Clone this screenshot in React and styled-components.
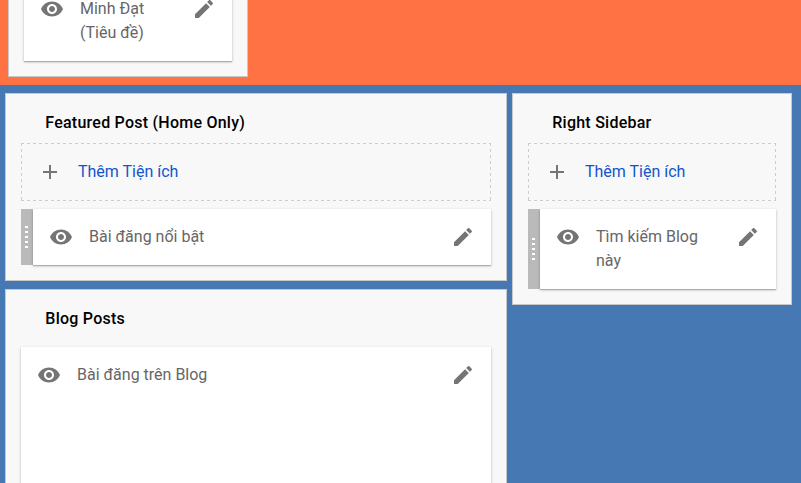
import React from "react";
import styled, { createGlobalStyle } from "styled-components";

const GlobalStyle = createGlobalStyle`
  * { box-sizing: border-box; }
  body {
    margin: 0;
    overflow: hidden;
    background: #4679b4;
    color: #666;
    font: 400 16px/24px Roboto, sans-serif;
  }
`;

const Page = styled.div`
  height: 483px;
  overflow: hidden;
  display: flex;
  flex-direction: column;
`;

const HeaderBand = styled.header`
  flex: none;
  height: 85px;
  padding: 0 8px 8px;
  display: flex;
  align-items: flex-end;
  overflow: hidden;
  background: #ff7243;
`;

const Columns = styled.main`
  flex: 1;
  min-height: 0;
  display: grid;
  grid-template-columns: 502px 280px;
  gap: 5px;
  align-items: start;
  padding: 8px 0 0 5px;
`;

const Column = styled.div`
  display: grid;
  gap: 8px;
`;

const Panel = styled.section`
  width: ${(p) => p.$width || "auto"};
  padding: 15px;
  background: #f8f8f8;
  border: 1px solid #c8c8c8;
`;

const Title = styled.h2`
  margin: 0;
  padding: 2px 0 0 24.3px;
  height: ${(p) => p.$height || 34}px;
  color: #000;
  font-size: 16px;
  font-weight: 500;
  line-height: 24px;
  letter-spacing: 0.24px;
`;

const dashX = "repeating-linear-gradient(90deg, #ccc 0 3px, transparent 3px 6px)";
const dashY = "repeating-linear-gradient(180deg, #ccc 0 3px, transparent 3px 6px)";

const AddButton = styled.a`
  display: flex;
  gap: 16px;
  height: 58px;
  padding: 17px;
  margin-bottom: 8px;
  background:
    ${dashX} top / 100% 1px no-repeat,
    ${dashX} bottom / 100% 1px no-repeat,
    ${dashY} left / 1px 100% no-repeat,
    ${dashY} right / 1px 100% no-repeat;
  color: #1155cc;
`;

const Card = styled.article`
  display: flex;
  min-height: ${(p) => p.$minHeight || 56}px;
`;

const Handle = styled.div`
  flex: none;
  width: 12px;
  padding-right: 1px;
  display: flex;
  flex-direction: column;
  align-items: center;
  justify-content: center;
  gap: 3px;
  background: #bababa;
`;

const Grip = styled.i`
  width: 3px;
  height: 2px;
  background: #fff;
`;

const CardBody = styled.div`
  flex: 1;
  display: flex;
  gap: 16px;
  padding: 16px;
  background: #fff;
  box-shadow: 0 1px 3px rgba(0, 0, 0, 0.2), 0 1px 1px rgba(0, 0, 0, 0.2);
`;

const Label = styled.span`
  flex: 1;
`;

const Icon = styled.svg`
  flex: none;
  width: 24px;
  height: 24px;
  fill: #757575;
`;

const Eye = () => (
  <Icon viewBox="0 0 24 24">
    <path d="M12 4.5C7 4.5 2.73 7.61 1 12c1.73 4.39 6 7.5 11 7.5s9.27-3.11 11-7.5c-1.73-4.39-6-7.5-11-7.5zM12 17c-2.76 0-5-2.24-5-5s2.24-5 5-5 5 2.24 5 5-2.24 5-5 5zm0-8c-1.66 0-3 1.34-3 3s1.34 3 3 3 3-1.34 3-3-1.34-3-3-3z" />
  </Icon>
);

const Pencil = () => (
  <Icon viewBox="0 0 24 24">
    <path d="M3 17.25V21h3.75L17.81 9.94l-3.75-3.75L3 17.25zM20.71 7.04c.39-.39.39-1.02 0-1.41l-2.34-2.34c-.39-.39-1.02-.39-1.41 0l-1.83 1.83 3.75 3.75 1.83-1.83z" />
  </Icon>
);

const Plus = () => (
  <Icon viewBox="0 0 24 24">
    <path d="M19 13h-6v6h-2v-6H5v-2h6V5h2v6h6v2z" />
  </Icon>
);

const Widget = ({ children, draggable, minHeight }) => (
  <Card $minHeight={minHeight}>
    {draggable && (
      <Handle>
        {[0, 1, 2, 3, 4].map((n) => (
          <Grip key={n} />
        ))}
      </Handle>
    )}
    <CardBody>
      <Eye />
      <Label>{children}</Label>
      <Pencil />
    </CardBody>
  </Card>
);

const AddWidget = () => (
  <AddButton>
    <Plus />
    <span>Thêm Tiện ích</span>
  </AddButton>
);

export default function App() {
  return (
    <>
      <GlobalStyle />
      <Page>
        <HeaderBand>
          <Panel $width="240px">
            <Widget>
              Minh Đạt
              <br />
              (Tiêu đề)
            </Widget>
          </Panel>
        </HeaderBand>
        <Columns>
          <Column>
            <Panel>
              <Title>Featured Post (Home Only)</Title>
              <AddWidget />
              <Widget draggable>Bài đăng nổi bật</Widget>
            </Panel>
            <Panel>
              <Title $height={42}>Blog Posts</Title>
              <Widget minHeight={220}>Bài đăng trên Blog</Widget>
            </Panel>
          </Column>
          <Panel>
            <Title>Right Sidebar</Title>
            <AddWidget />
            <Widget draggable>Tìm kiếm Blog này</Widget>
          </Panel>
        </Columns>
      </Page>
    </>
  );
}
